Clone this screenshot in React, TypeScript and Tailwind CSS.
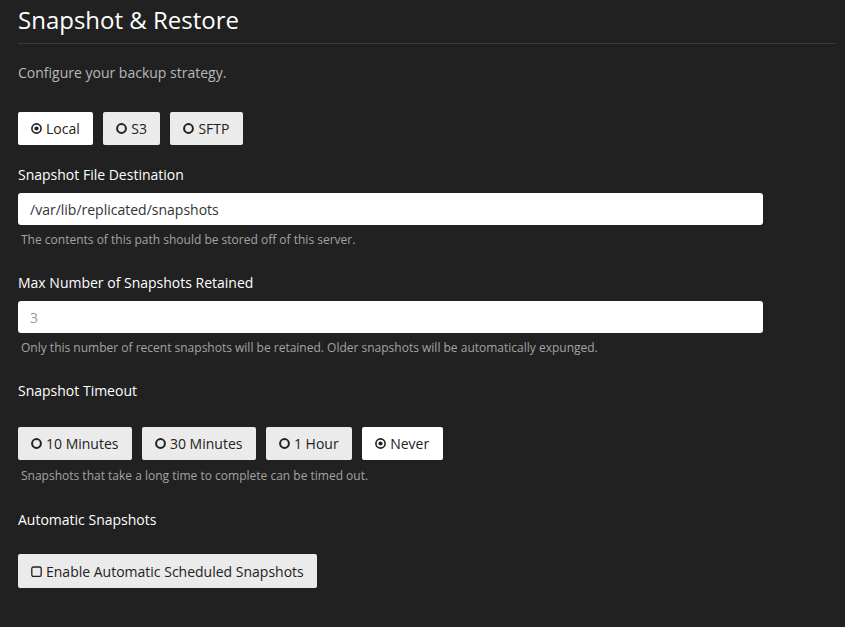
import { useState } from "react";

const CircleIcon = ({ checked }: { checked: boolean }) => (
  <svg width="11" height="11" viewBox="0 0 11 11" className="shrink-0">
    {checked ? (
      <>
        <circle cx="5.5" cy="5.5" r="4.6" fill="none" stroke="#222" strokeWidth="1.6" />
        <circle cx="5.5" cy="5.5" r="2.1" fill="#222" />
      </>
    ) : (
      <circle cx="5.5" cy="5.5" r="4.4" fill="none" stroke="#222" strokeWidth="2" />
    )}
  </svg>
);

const SquareIcon = () => (
  <svg width="11" height="11" viewBox="0 0 11 11" className="shrink-0">
    <rect x="0.8" y="1" width="9.4" height="9.4" rx="1.6" fill="none" stroke="#222" strokeWidth="1.3" />
  </svg>
);

interface RadioGroupProps {
  options: string[];
  value: string;
  onChange: (v: string) => void;
}

const RadioGroup = ({ options, value, onChange }: RadioGroupProps) => (
  <div className="flex gap-[10px]">
    {options.map((opt) => {
      const selected = opt === value;
      return (
        <button
          key={opt}
          onClick={() => onChange(opt)}
          className={`flex items-center gap-[4px] h-[33px] pl-[13px] pr-[13.5px] rounded-[2px] text-[14px] text-[#222] cursor-pointer ${
            selected ? "bg-white" : "bg-[#ebebeb]"
          }`}
        >
          <CircleIcon checked={selected} />
          <span>{opt}</span>
        </button>
      );
    })}
  </div>
);

const Label = ({ children, className = "" }: { children: string; className?: string }) => (
  <div className={`text-[14px] leading-[20px] font-medium text-white ${className}`}>{children}</div>
);

const Help = ({ children, className = "" }: { children: string; className?: string }) => (
  <div className={`pl-[3px] text-[12px] leading-[16px] text-[#a3a3a3] ${className}`}>{children}</div>
);

export default function App() {
  const [storage, setStorage] = useState("Local");
  const [timeout, setTimeoutValue] = useState("Never");

  return (
    <div
      className="min-h-[627px] w-full bg-[#212121] pl-[18px] pr-[10px] pt-[5px]"
      style={{ fontFamily: '"Open Sans", "Noto Sans", sans-serif' }}
    >
      <h1 className="text-[24px] leading-[29px] text-white pb-[9px] border-b border-[#3a3a3a]">
        Snapshot &amp; Restore
      </h1>

      <p className="mt-[19px] text-[14px] leading-[20px] text-[#b8b8b8]">Configure your backup strategy.</p>

      <div className="mt-[29px]">
        <RadioGroup options={["Local", "S3", "SFTP"]} value={storage} onChange={setStorage} />
      </div>

      <Label className="mt-[20px]">Snapshot File Destination</Label>
      <input
        defaultValue="/var/lib/replicated/snapshots"
        className="mt-[8px] block w-[745px] h-[32px] px-[12px] rounded-[3px] bg-white text-[14px] text-[#333] outline-none"
      />
      <Help className="mt-[7px]">The contents of this path should be stored off of this server.</Help>

      <Label className="mt-[25px]">Max Number of Snapshots Retained</Label>
      <input
        placeholder="3"
        className="mt-[8px] block w-[745px] h-[32px] px-[12px] rounded-[3px] bg-white text-[14px] text-[#333] placeholder-[#9a9a9a] outline-none"
      />
      <Help className="mt-[7px]">
        Only this number of recent snapshots will be retained. Older snapshots will be automatically expunged.
      </Help>

      <Label className="mt-[25px]">Snapshot Timeout</Label>
      <div className="mt-[26px]">
        <RadioGroup
          options={["10 Minutes", "30 Minutes", "1 Hour", "Never"]}
          value={timeout}
          onChange={setTimeoutValue}
        />
      </div>
      <Help className="mt-[8px]">Snapshots that take a long time to complete can be timed out.</Help>

      <Label className="mt-[26px]">Automatic Snapshots</Label>
      <button className="mt-[24px] flex items-center gap-[4px] h-[34px] px-[13px] rounded-[2px] bg-[#ebebeb] text-[14px] text-[#222] cursor-pointer">
        <SquareIcon />
        <span>Enable Automatic Scheduled Snapshots</span>
      </button>
    </div>
  );
}
